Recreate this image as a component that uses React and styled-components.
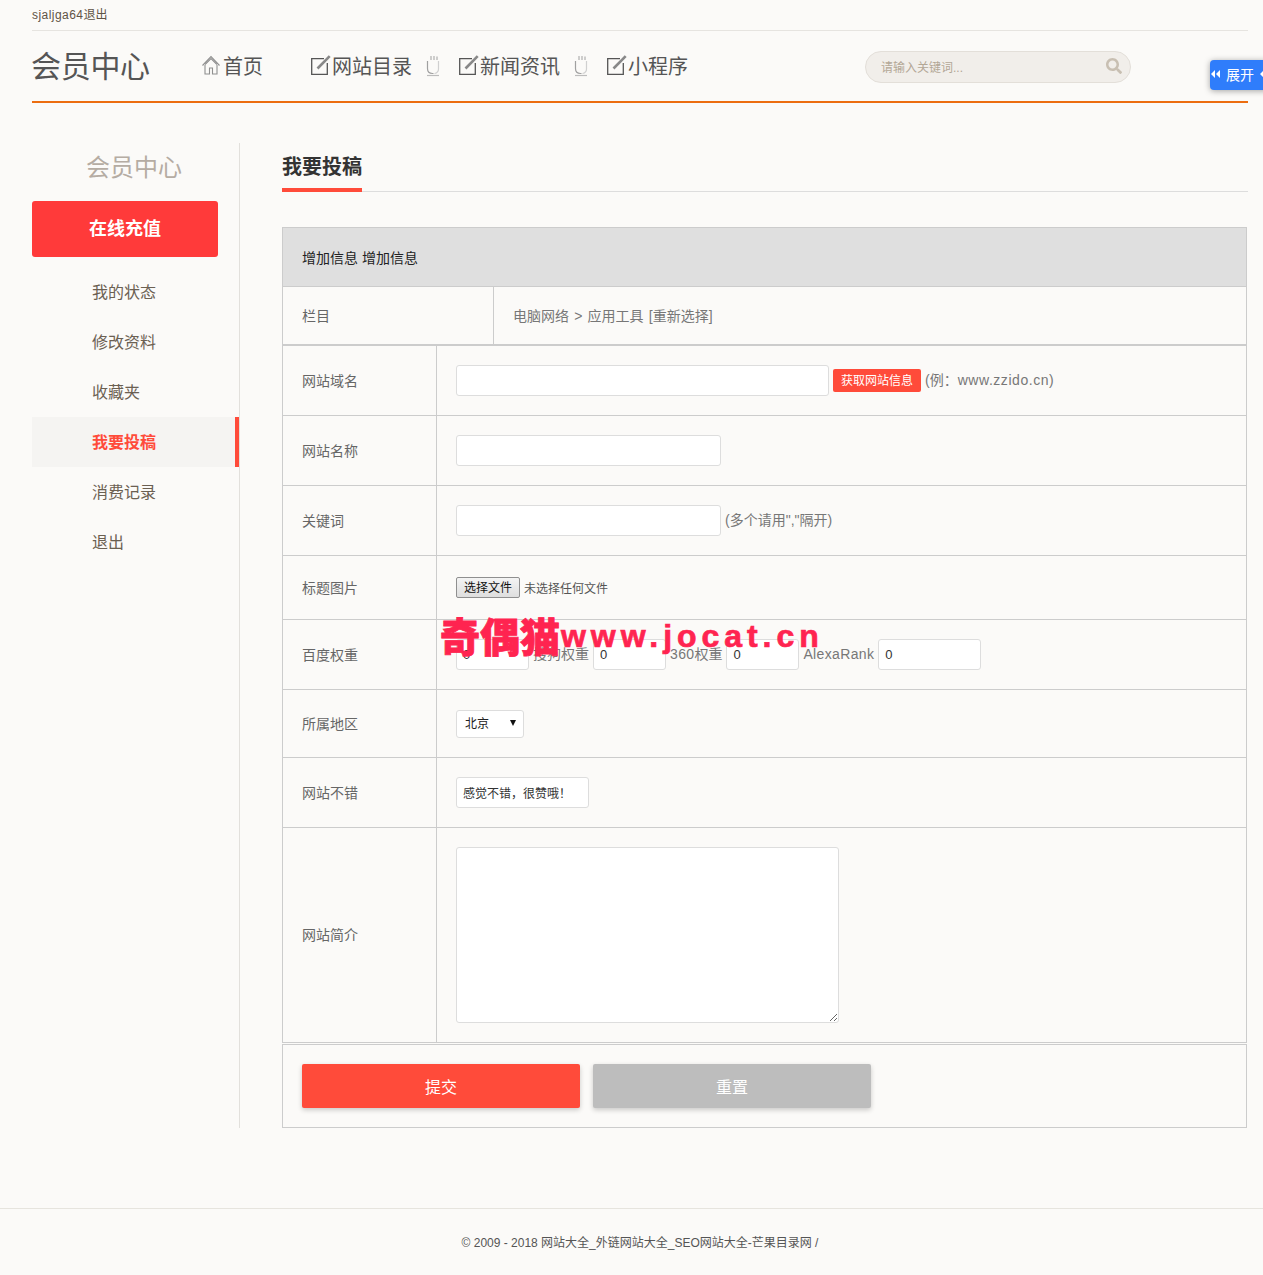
import React from "react";
import styled, { createGlobalStyle } from "styled-components";
import { FaSearch } from "react-icons/fa";

const GlobalStyle = createGlobalStyle`
  html, body {
    margin: 0;
    padding: 0;
    background: #fbfaf8;
    font-family: "Liberation Sans", "Noto Sans CJK SC", sans-serif;
    color: #666;
  }
  * { box-sizing: border-box; }
`;

const Page = styled.div`
  position: relative;
  width: 1263px;
  height: 1275px;
  overflow: hidden;
`;

const Wrap = styled.div`
  padding: 0 15px 0 32px;
`;

const TopBar = styled.div`
  height: 31px;
  border-bottom: 1px solid #e6e4e0;
  font-size: 12px;
  line-height: 30px;
  color: #5f5345;
`;

const Latin = styled.span`
  letter-spacing: ${(p) => p.$ls}px;
`;

const Header = styled.header`
  display: flex;
  align-items: center;
  height: 72px;
  border-bottom: 2px solid #ec6d10;
`;

const Logo = styled.div`
  width: 170px;
  padding-bottom: 4px;
  margin-left: -1px;
  margin-right: 1px;
  font-size: 30px;
  color: #555;
  letter-spacing: -0.3px;
`;

const Nav = styled.nav`
  display: flex;
  align-items: center;
  width: 663px;
  padding-bottom: 2px;
`;

const NavLink = styled.a`
  display: flex;
  align-items: center;
  gap: ${(p) => p.$gap || 1}px;
  font-size: 20px;
  color: #555;
  margin-right: ${(p) => p.$mr || 0}px;
`;

const Cup = styled.svg`
  width: 14px;
  height: 22px;
  margin: 1px 19px 0 14px;
`;

const Search = styled.div`
  display: flex;
  align-items: center;
  justify-content: space-between;
  width: 266px;
  height: 32px;
  margin-top: 2px;
  padding: 0 8px 2px 15px;
  background: #f1eeea;
  border: 1px solid #e3dfd9;
  border-radius: 16px;
  font-size: 12px;
  color: #b3a796;
  svg {
    width: 16px;
    height: 16px;
    color: #c8bfb2;
  }
`;

const Expand = styled.div`
  position: absolute;
  left: 1210px;
  top: 60px;
  display: flex;
  align-items: center;
  width: 60px;
  height: 30px;
  padding: 0 0 3px 1px;
  gap: 6px;
  background: #2f7dfb;
  border-radius: 4px;
  box-shadow: 0 1px 6px rgba(0, 0, 0, 0.35);
  font-size: 14px;
  color: #fff;
  svg {
    flex: none;
    width: 9px;
    height: 8px;
  }
`;

const Content = styled.div`
  display: flex;
  margin-top: 40px;
`;

const Side = styled.aside`
  width: 208px;
  height: 985px;
  border-right: 1px solid #e2e0dc;
`;

const SideTitle = styled.div`
  height: 58px;
  padding: 8px 0 0 54px;
  font-size: 24px;
  line-height: 34px;
  color: #b5aca3;
`;

const Recharge = styled.a`
  display: block;
  width: 186px;
  height: 56px;
  margin-bottom: 10px;
  background: #ff3a3a;
  border-radius: 3px;
  text-align: center;
  font-size: 18px;
  font-weight: 700;
  line-height: 56px;
  color: #fff;
`;

const MenuItem = styled.a`
  display: block;
  height: 50px;
  padding-left: 60px;
  font-size: 16px;
  line-height: 52px;
  color: ${(p) => (p.$active ? "#ff4b3a" : "#6b6052")};
  font-weight: ${(p) => (p.$active ? 700 : 400)};
  background: ${(p) => (p.$active ? "#f5f4f2" : "transparent")};
  border-right: ${(p) => (p.$active ? "4px solid #ff4b3a" : "none")};
`;

const Main = styled.main`
  width: 966px;
  margin-left: 42px;
`;

const TitleBar = styled.div`
  height: 49px;
  margin-bottom: 35px;
  border-bottom: 1px solid #ddd;
`;

const Title = styled.h2`
  display: inline-block;
  height: 49px;
  margin: 0;
  padding-top: 8px;
  border-bottom: 4px solid #ff4b3a;
  font-size: 20px;
  line-height: 32px;
  font-weight: 700;
  color: #333;
`;

const Table = styled.section`
  width: 965px;
  border: 1px solid #ccc;
  margin-bottom: ${(p) => p.$mb || 0}px;
`;

const HeadRow = styled.div`
  height: 59px;
  padding-left: 19px;
  background: #dfdfdf;
  border-bottom: 1px solid #ccc;
  font-size: 14px;
  line-height: 60px;
  color: #222;
`;

const Row = styled.div`
  display: flex;
  height: ${(p) => p.$h}px;
  border-bottom: ${(p) => (p.$last ? "none" : "1px solid #ccc")};
`;

const Label = styled.div`
  display: flex;
  align-items: center;
  flex: none;
  width: ${(p) => p.$w || 154}px;
  padding: 0 0 2px 19px;
  border-right: 1px solid #ccc;
  font-size: 14px;
  color: #666;
`;

const Field = styled.div`
  display: flex;
  align-items: center;
  flex: 1;
  padding-left: 19px;
  font-size: 14px;
  color: #777;
  white-space: nowrap;
`;

const Input = styled.input`
  flex: none;
  width: ${(p) => p.$w}px;
  height: 31px;
  padding: 0 6px;
  background: #fff;
  border: 1px solid #ddd;
  border-radius: 3px;
  font: ${(p) => p.$fs || 12}px "Liberation Sans", "Noto Sans CJK SC", sans-serif;
  color: #333;
  outline: none;
`;

const Crumb = styled.span`
  padding-bottom: 2px;
  word-spacing: 1.3px;
`;

const Note = styled.span`
  margin: 0 4px;
  padding-bottom: ${(p) => p.$pb ?? 4}px;
`;

const FetchBtn = styled.a`
  width: 88px;
  height: 23px;
  margin-left: 4px;
  background: #ff4b3a;
  border-radius: 2px;
  text-align: center;
  font-size: 12px;
  line-height: 24px;
  color: #fff;
`;

const FileBtn = styled.button`
  width: 64px;
  height: 21px;
  padding: 0;
  background: linear-gradient(#f4f4f4, #dedede);
  border: 1px solid #8f8f8f;
  border-radius: 2px;
  font: 12px/1 "Liberation Sans", "Noto Sans CJK SC", sans-serif;
  color: #111;
`;

const FileNote = styled.span`
  margin-left: 4px;
  padding-bottom: 1px;
  font-size: 12px;
  color: #555;
`;

const Select = styled.div`
  position: relative;
  width: 68px;
  height: 28px;
  padding-left: 8px;
  background: #fff;
  border: 1px solid #ddd;
  border-radius: 3px;
  font-size: 12px;
  line-height: 26px;
  color: #222;
  &::after {
    content: "";
    position: absolute;
    right: 7px;
    top: 9px;
    border-style: solid;
    border-width: 6px 3px 0;
    border-color: #111 transparent transparent;
  }
`;

const TextArea = styled.textarea`
  width: 383px;
  height: 176px;
  background: #fff;
  border: 1px solid #ddd;
  border-radius: 3px;
  outline: none;
`;

const Actions = styled.div`
  display: flex;
  gap: 13px;
  height: 82px;
  padding: 19px 0 0 19px;
`;

const ActionBtn = styled.button`
  width: 278px;
  height: 44px;
  background: ${(p) => (p.$grey ? "#bdbdbd" : "#ff4b3a")};
  border: none;
  border-radius: 2px;
  box-shadow: 0 2px 5px rgba(0, 0, 0, 0.2);
  font: 16px "Liberation Sans", "Noto Sans CJK SC", sans-serif;
  color: #fff;
`;

const Footer = styled.footer`
  margin-top: 80px;
  height: 67px;
  border-top: 1px solid #e6e4de;
  text-align: center;
  padding: 24px 0 0 17px;
  font-size: 12px;
  line-height: 20px;
  color: #555;
`;

const Watermark = styled.div`
  position: absolute;
  left: 440px;
  top: 606px;
  display: flex;
  align-items: baseline;
  height: 50px;
  font-size: 40px;
  font-weight: 900;
  color: #ff2450;
  -webkit-text-stroke: 0.8px #ff2450;
  white-space: nowrap;
  span {
    margin-left: 1px;
    font: 700 32px "Liberation Sans", sans-serif;
    letter-spacing: 4.95px;
    -webkit-text-stroke: 0.7px #ff2450;
    transform: translateY(-5px);
  }
`;

const HomeIcon = () => (
  <svg width="18" height="20" viewBox="0 0 18 20" fill="none" stroke="#8f8f8f" strokeWidth="1.1">
    <path d="M.5 10.500 9 1.500l8.500 9" />
    <path d="M3 9.500 9 3.500l6 6" />
    <path d="M3 10v9h4.500v-6h3v6H15v-9" />
  </svg>
);

const EditIcon = () => (
  <svg width="20" height="20" viewBox="0 0 20 20" fill="none">
    <path d="M13 3.700H.7v15.600h15.600V8" stroke="#555" strokeWidth="1.3" />
    <path d="M6.500 13.500 18.700 1.200" stroke="#888" strokeWidth="2.6" />
  </svg>
);

const CupIcon = () => (
  <Cup viewBox="0 0 14 22" fill="none" stroke="#a0a0a0" strokeWidth="1.2">
    <path d="M5 1v4M8 1v4M11 1.500v3.500" stroke="#b0b0b0" />
    <path d="M1.500 6v7.500c0 3 2 5 5 5h1" />
    <path d="M12.500 6v8c0 2.500-1.500 4-4 4.500" stroke="#d0d0d0" />
    <path d="M1 20.500h12" stroke="#bcbcbc" />
  </Cup>
);

const LeftChevrons = () => (
  <svg viewBox="0 0 9 8" fill="#fff">
    <path d="M4 0v8L0 4zM9 0v8L5 4z" />
  </svg>
);

const menu = ["我的状态", "修改资料", "收藏夹", "我要投稿", "消费记录", "退出"];

export default function App() {
  return (
    <Page>
      <GlobalStyle />
      <Wrap>
        <TopBar>
          <Latin $ls={0.45}>sjaljga64</Latin>退出
        </TopBar>
        <Header>
          <Logo>会员中心</Logo>
          <Nav>
            <NavLink $mr={48} $gap={3}>
              <HomeIcon />
              首页
            </NavLink>
            <NavLink>
              <EditIcon />
              网站目录
            </NavLink>
            <CupIcon />
            <NavLink>
              <EditIcon />
              新闻资讯
            </NavLink>
            <CupIcon />
            <NavLink>
              <EditIcon />
              小程序
            </NavLink>
          </Nav>
          <Search>
            请输入关键词...
            <FaSearch />
          </Search>
        </Header>
        <Content>
          <Side>
            <SideTitle>会员中心</SideTitle>
            <Recharge>在线充值</Recharge>
            {menu.map((item) => (
              <MenuItem key={item} $active={item === "我要投稿"}>
                {item}
              </MenuItem>
            ))}
          </Side>
          <Main>
            <TitleBar>
              <Title>我要投稿</Title>
            </TitleBar>
            <Table>
              <HeadRow>增加信息 增加信息</HeadRow>
              <Row $h={57} $last>
                <Label $w={211}>栏目</Label>
                <Field>
                  <Crumb>电脑网络 &gt; 应用工具 [重新选择]</Crumb>
                </Field>
              </Row>
            </Table>
            <Table $mb={1}>
              <Row $h={70}>
                <Label>网站域名</Label>
                <Field>
                  <Input $w={373} />
                  <FetchBtn>获取网站信息</FetchBtn>
                  <Note>
                    (例：<Latin $ls={0.55}>www.zzido.cn</Latin>)
                  </Note>
                </Field>
              </Row>
              <Row $h={70}>
                <Label>网站名称</Label>
                <Field>
                  <Input $w={265} />
                </Field>
              </Row>
              <Row $h={70}>
                <Label>关键词</Label>
                <Field>
                  <Input $w={265} />
                  <Note>(多个请用","隔开)</Note>
                </Field>
              </Row>
              <Row $h={64}>
                <Label>标题图片</Label>
                <Field>
                  <FileBtn type="button">选择文件</FileBtn>
                  <FileNote>未选择任何文件</FileNote>
                </Field>
              </Row>
              <Row $h={70}>
                <Label>百度权重</Label>
                <Field>
                  <Input $w={73} $fs={13} defaultValue="0" />
                  <Note>搜狗权重</Note>
                  <Input $w={73} $fs={13} defaultValue="0" />
                  <Note>
                    <Latin $ls={0.35}>360</Latin>权重
                  </Note>
                  <Input $w={73} $fs={13} defaultValue="0" />
                  <Note $pb={2}>
                    <Latin $ls={0.35}>AlexaRank</Latin>
                  </Note>
                  <Input $w={103} $fs={13} defaultValue="0" />
                </Field>
              </Row>
              <Row $h={68}>
                <Label>所属地区</Label>
                <Field>
                  <Select>北京</Select>
                </Field>
              </Row>
              <Row $h={70}>
                <Label>网站不错</Label>
                <Field>
                  <Input $w={133} defaultValue="感觉不错，很赞哦！" />
                </Field>
              </Row>
              <Row $h={214} $last>
                <Label>网站简介</Label>
                <Field>
                  <TextArea />
                </Field>
              </Row>
            </Table>
            <Table>
              <Actions>
                <ActionBtn>提交</ActionBtn>
                <ActionBtn $grey>重置</ActionBtn>
              </Actions>
            </Table>
          </Main>
        </Content>
      </Wrap>
      <Footer>© 2009 - 2018 网站大全_外链网站大全_SEO网站大全-芒果目录网 /</Footer>
      <Expand>
        <LeftChevrons />
        展开
        <LeftChevrons />
      </Expand>
      <Watermark>
        奇偶猫<span>www.jocat.cn</span>
      </Watermark>
    </Page>
  );
}
